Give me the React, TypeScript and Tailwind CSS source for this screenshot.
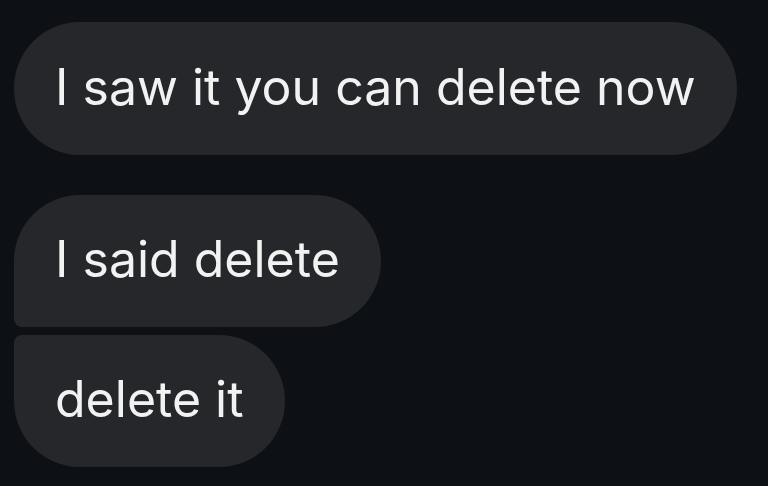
export default function App() {
  const font = { fontFamily: "Inter, 'Liberation Sans', sans-serif" };
  return (
    <div className="w-[768px] h-[486px] bg-[#0d1014] overflow-hidden flex flex-col items-start pl-[14px] pt-[22px]" style={font}>
      <div className="h-[133px] flex items-center px-[41px] pb-[4px] rounded-[66px] bg-[#25272b] text-[#f2f2f2] text-[50px] leading-none whitespace-nowrap">
        I saw it you can delete now
      </div>
      <div className="mt-[40px] h-[132px] flex items-center px-[41px] pb-[4px] rounded-[66px] rounded-bl-[8px] bg-[#25272b] text-[#f2f2f2] text-[50px] leading-none whitespace-nowrap">
        I said delete
      </div>
      <div className="mt-[8px] h-[132px] flex items-center px-[41px] pb-[4px] rounded-[66px] rounded-tl-[8px] bg-[#25272b] text-[#f2f2f2] text-[50px] leading-none whitespace-nowrap">
        delete it
      </div>
    </div>
  );
}
